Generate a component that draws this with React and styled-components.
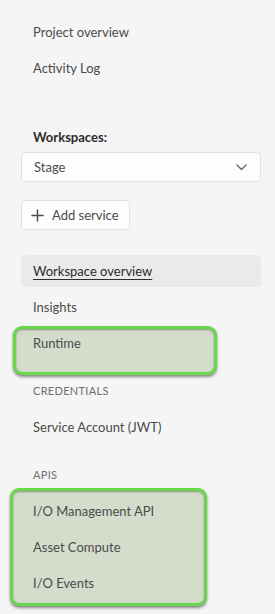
import React from "react";
import styled, { createGlobalStyle } from "styled-components";

const GlobalStyle = createGlobalStyle`
  html, body {
    margin: 0;
    padding: 0;
    background: #f5f5f5;
  }
  body {
    font-family: Lato, "Liberation Sans", sans-serif;
    color: #4b4b4b;
  }
`;

const Sidebar = styled.nav`
  width: 275px;
  min-height: 614px;
  box-sizing: border-box;
  padding: 14px 14px 0 21px;
  background: #f5f5f5;
`;

const List = styled.ul`
  display: flex;
  flex-direction: column;
  list-style: none;
  margin: ${(p) => p.$top || 0}px 0 0;
  padding: 0;
`;

const Item = styled.li`
  position: relative;
  z-index: 1;
  display: flex;
  align-items: center;
  height: 32px;
  margin: 2px 0;
  padding-left: 12px;
  border-radius: 4px;
  font-size: 13px;
  color: ${(p) => (p.$current ? "#2c2c2c" : "#4b4b4b")};
  background: ${(p) => (p.$current ? "#eaeaea" : "transparent")};
  text-decoration: ${(p) => (p.$current ? "underline" : "none")};
  text-underline-offset: 3px;
  width: ${(p) => (p.$current ? "240px" : "auto")};
  box-sizing: border-box;
`;

const Label = styled.div`
  margin-top: 42px;
  font-size: 13px;
  font-weight: 700;
  line-height: 18px;
  color: #2c2c2c;
  padding-left: 12px;
`;

const Select = styled.div`
  display: flex;
  align-items: center;
  justify-content: space-between;
  margin-top: 6px;
  width: 240px;
  height: 30px;
  box-sizing: border-box;
  padding: 0 13px 0 12px;
  background: #fdfdfd;
  border: 1px solid #e2e2e2;
  border-radius: 4px;
  font-size: 13px;
  color: #4b4b4b;
`;

const Button = styled.button`
  display: flex;
  align-items: center;
  gap: 8px;
  margin-top: 18px;
  height: 30px;
  box-sizing: border-box;
  padding: 0 10px 0 9px;
  background: #fdfdfd;
  border: 1px solid #e2e2e2;
  border-radius: 4px;
  font-family: inherit;
  font-size: 13px;
  color: #4b4b4b;
`;

const Section = styled.div`
  margin-top: 22px;
  margin-bottom: 10px;
  padding-left: 12px;
  font-size: 11px;
  line-height: 16px;
  letter-spacing: 0.3px;
  text-transform: uppercase;
  color: #6e6e6e;
`;

const Highlight = styled.div`
  position: relative;
  &::before {
    content: "";
    position: absolute;
    z-index: 0;
    top: ${(p) => p.$top}px;
    left: ${(p) => p.$left}px;
    width: ${(p) => p.$width}px;
    height: ${(p) => p.$height}px;
    box-sizing: border-box;
    border: 3px solid #67d84b;
    border-radius: 9px;
    background: #d4ddcb;
    box-shadow: 0 2px 3px rgba(0, 0, 0, 0.45),
      inset 0 1px 2px rgba(0, 0, 0, 0.35);
  }
`;

const Chevron = () => (
  <svg width="11" height="7" viewBox="0 0 11 7" fill="none">
    <path d="M1 1l4.5 4.5L10 1" stroke="#6e6e6e" strokeWidth="1.5" strokeLinecap="round" strokeLinejoin="round" />
  </svg>
);

const Plus = () => (
  <svg width="13" height="13" viewBox="0 0 13 13" fill="none">
    <path d="M6.5 1v11M1 6.5h11" stroke="#4b4b4b" strokeWidth="1.5" strokeLinecap="round" />
  </svg>
);

export default function App() {
  return (
    <>
      <GlobalStyle />
      <Sidebar>
        <List>
          <Item>Project overview</Item>
          <Item>Activity Log</Item>
        </List>

        <Label>Workspaces:</Label>
        <Select>
          <span>Stage</span>
          <Chevron />
        </Select>
        <Button>
          <Plus />
          Add service
        </Button>

        <List $top={23}>
          <Item $current>Workspace overview</Item>
          <Item>Insights</Item>
          <Highlight $top={1} $left={-8} $width={204} $height={49}>
            <Item>Runtime</Item>
          </Highlight>
        </List>

        <Section>Credentials</Section>
        <List>
          <Item>Service Account (JWT)</Item>
        </List>

        <Section>APIs</Section>
        <Highlight $top={-5} $left={-11} $width={197} $height={118}>
          <List>
            <Item>I/O Management API</Item>
            <Item>Asset Compute</Item>
            <Item>I/O Events</Item>
          </List>
        </Highlight>
      </Sidebar>
    </>
  );
}
